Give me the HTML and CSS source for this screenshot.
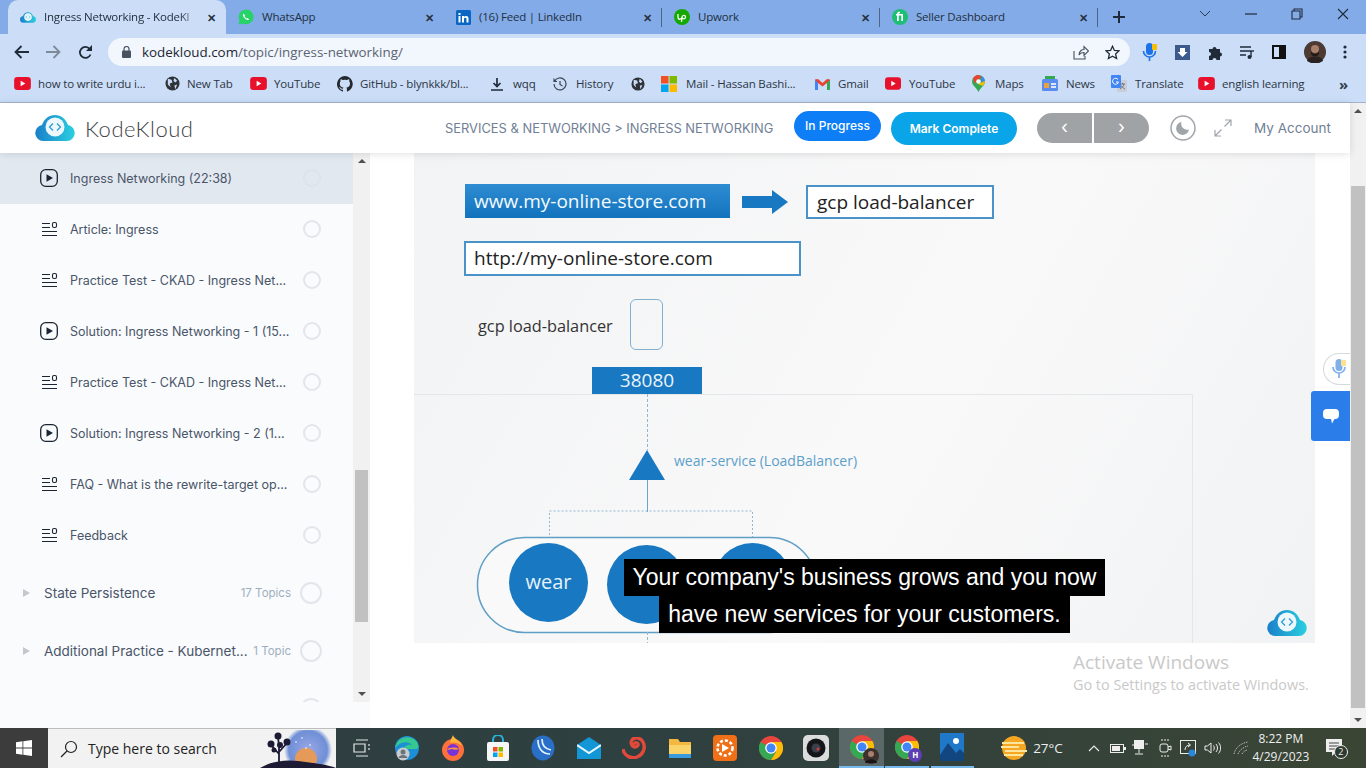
FILE: index.html
```html
<!DOCTYPE html>
<html>
<head>
  <title>Ingress Networking - KodeKloud</title>
  <link rel="stylesheet" href="styles.css">
</head>
<body>
  <svg class="defs" width="0" height="0">
    <defs>
      <linearGradient id="kkGrad" x1="0" x2="1" y1="0" y2="0">
        <stop offset="0" stop-color="#1a7fc9"/>
        <stop offset="1" stop-color="#2ad0e0"/>
      </linearGradient>
      <radialGradient id="glow" cx=".5" cy=".5" r=".5">
        <stop offset="0" stop-color="#9aa8e6"/>
        <stop offset=".8" stop-color="#6f8fd6"/>
        <stop offset="1" stop-color="#f2f2f2"/>
      </radialGradient>
      <symbol id="kk" viewBox="0 0 40 26">
        <path d="M8 26a8 8 0 0 1-1-15.900C9 4 14 0 20 0s11 4 13 10.100A8 8 0 0 1 32 26z" fill="url(#kkGrad)"/>
        <circle cx="20" cy="12" r="9.500" fill="#eef8fc"/>
        <path d="M18 8.500 14.500 12l3.500 3.500M22 8.500l3.500 3.500-3.500 3.500" fill="none" stroke="#2a9fd6" stroke-width="1.300"/>
      </symbol>
      <symbol id="yt" viewBox="0 0 18 14">
        <rect width="18" height="14" rx="3.500" fill="#e8112b"/>
        <path d="M7 4l5 3-5 3z" fill="#fff"/>
      </symbol>
      <symbol id="globe" viewBox="0 0 16 16">
        <circle cx="8" cy="8" r="7.500" fill="#2f3237"/>
        <path d="M3 3l4 1 1 3-3 1 1 4-3-3zM10 2l3 3-2 2-2-2zM10 10l3-1-2 5z" fill="#c9dbf6"/>
      </symbol>
      <symbol id="play" viewBox="0 0 18 18">
        <rect x=".7" y=".7" width="16.600" height="16.600" rx="5" fill="none" stroke="#1a2433" stroke-width="1.300"/>
        <path d="M6.500 5.200v7.600L13 9z" fill="#1a2433"/>
      </symbol>
      <symbol id="doc" viewBox="0 0 16 16">
        <path d="M1 2.500h8M1 6.500h8M1 10.500h15M1 14.500h15" fill="none" stroke="#1a2433" stroke-width="1.100"/>
        <rect x="11.500" y="1.500" width="4" height="5" rx="1.500" fill="none" stroke="#1a2433" stroke-width="1.100"/>
      </symbol>
      <symbol id="chrome" viewBox="0 0 24 24">
        <circle cx="12" cy="12" r="12" fill="#e8453c"/>
        <path d="M12 12 1.600 6A12 12 0 0 0 12 24l5-8z" fill="#34a853"/>
        <path d="M12 6h10.400A12 12 0 0 1 12 24l5-8z" fill="#fbbc05"/>
        <circle cx="12" cy="12" r="5.800" fill="#fff"/>
        <circle cx="12" cy="12" r="4.500" fill="#4285f4"/>
      </symbol>
    </defs>
  </svg>

  <div class="tabstrip">
    <div class="tab tab-active">
      <svg class="fav" width="16" height="11"><use href="#kk"/></svg>
      <span class="tab-title tab-title-fade">Ingress Networking - KodeKl</span>
      <span class="tab-x">✕</span>
    </div>
    <div class="tab">
      <svg class="fav" width="16" height="16" viewBox="0 0 16 16"><path d="M.5 15.500l1.100-4A7.400 7.400 0 1 1 4.500 14.400z" fill="#25d366"/><path d="M5.500 4.500c-1 1-.6 3 1.200 4.700s3.500 2.300 4.500 1.200l-1.600-1.500-1 .6c-1-.5-1.700-1.300-2.100-2.200l.7-.9z" fill="#fff"/></svg>
      <span class="tab-title">WhatsApp</span>
      <span class="tab-x">✕</span>
    </div>
    <div class="tab">
      <svg class="fav" width="15" height="15" viewBox="0 0 15 15"><rect width="15" height="15" rx="1.500" fill="#0a66c2"/><path d="M2.500 6h2v6.500h-2zM2.500 3h2v2h-2zM6 6h2v1c.6-1.400 4.500-1.800 4.500 1.500v4h-2V9c0-1.800-2.500-1.600-2.500 0v3.500H6z" fill="#fff"/></svg>
      <span class="tab-title">(16) Feed | LinkedIn</span>
      <span class="tab-x">✕</span>
    </div>
    <div class="tab">
      <svg class="fav" width="16" height="16" viewBox="0 0 16 16"><circle cx="8" cy="8" r="8" fill="#14a800"/><path d="M4 5v3c0 3 3.500 3 4 0 .3-2 3.500-2.500 3.500 0s-3 2.300-3.500.3L7.500 13" fill="none" stroke="#fff" stroke-width="1.300"/></svg>
      <span class="tab-title">Upwork</span>
      <span class="tab-x">✕</span>
    </div>
    <div class="tab">
      <svg class="fav" width="16" height="16" viewBox="0 0 16 16"><circle cx="8" cy="8" r="8" fill="#1dbf73"/><path d="M5 12V6.500H4V5h1c0-2 1.500-2.500 3-2.200v1.400c-.8-.1-1.200 0-1.200.8H11v7H9.300V6.500H6.800V12z" fill="#fff"/></svg>
      <span class="tab-title">Seller Dashboard</span>
      <span class="tab-x">✕</span>
    </div>
    <span class="tab-plus">
      <svg width="12" height="12" viewBox="0 0 12 12"><path d="M6 0v12M0 6h12" stroke="#1f2a3a" stroke-width="2"/></svg>
    </span>
    <div class="win-controls">
      <svg width="12" height="8" viewBox="0 0 12 8"><path d="M1 1l5 5 5-5" fill="none" stroke="#2d3a4d" stroke-width="1"/></svg>
      <svg width="12" height="2" viewBox="0 0 12 2"><path d="M0 1h12" stroke="#1f2a3a" stroke-width="1.200"/></svg>
      <svg width="12" height="12" viewBox="0 0 12 12"><path d="M3 3V1h8v8H9M1 3h8v8H1z" fill="none" stroke="#1f2a3a" stroke-width="1.100"/></svg>
      <svg width="12" height="12" viewBox="0 0 12 12"><path d="M1 1l10 10M11 1 1 11" stroke="#1f2a3a" stroke-width="1.100"/></svg>
    </div>
  </div>

  <div class="toolbar">
    <svg class="nav-btn" width="16" height="14" viewBox="0 0 16 14"><path d="M15 7H2M7.500 1 1.500 7l6 6" fill="none" stroke="#202b3a" stroke-width="1.800"/></svg>
    <svg class="nav-btn" width="16" height="14" viewBox="0 0 16 14"><path d="M1 7h13M8.500 1l6 6-6 6" fill="none" stroke="#7f8a99" stroke-width="1.800"/></svg>
    <svg class="nav-btn" width="15" height="15" viewBox="0 0 15 15"><path d="M12.500 9.500a5.500 5.500 0 1 1-.8-5.500" fill="none" stroke="#202b3a" stroke-width="1.800"/><path d="M14 0v6H8z" fill="#202b3a"/></svg>
    <div class="omnibox">
      <svg width="9" height="12" viewBox="0 0 9 12"><rect y="4.500" width="9" height="7.500" rx="1" fill="#4a5260"/><path d="M2 5V3a2.500 2.500 0 0 1 5 0v2" fill="none" stroke="#4a5260" stroke-width="1.200"/></svg>
      <span class="url"><b>kodekloud.com</b>/topic/ingress-networking/</span>
      <svg class="omni-share" width="16" height="15" viewBox="0 0 16 15"><path d="M1 6v8h11v-3M6 10c0-4 3-5.500 5-5.500V1.500L15.500 6 11 10.500v-3c-2 0-4 .5-5 2.500z" fill="none" stroke="#46505f" stroke-width="1.100"/></svg>
      <svg class="omni-star" width="15" height="15" viewBox="0 0 15 15"><path d="M7.500 1.200l1.900 4.200 4.600.5-3.400 3.100 1 4.500-4.100-2.300-4.100 2.300 1-4.500L1 5.900l4.600-.5z" fill="none" stroke="#202b3a" stroke-width="1.300"/></svg>
    </div>
    <div class="ext-icons">
      <svg width="16" height="18" viewBox="0 0 16 18"><rect x="4" y="0" width="7" height="12" rx="3.500" fill="#1a73e8"/><rect x="10" y="1" width="5" height="6" rx="1" fill="#fbbc05"/><path d="M1.500 8a6 6 0 0 0 12 0M7.500 14v4" fill="none" stroke="#1a73e8" stroke-width="1.600"/></svg>
      <svg width="15" height="15" viewBox="0 0 15 15"><rect width="15" height="15" fill="#3c5a8c"/><path d="M5 3h5v4h2.500l-5 5-5-5H5z" fill="#fff"/></svg>
      <svg width="15" height="15" viewBox="0 0 15 15"><path d="M1 4h3.500a2 2 0 1 1 4 0H12v3.500a2 2 0 1 1 0 4V15H8.500a2 2 0 1 0-4 0H1v-4a2 2 0 1 0 0-4z" fill="#202b3a"/></svg>
      <svg width="15" height="13" viewBox="0 0 15 13"><path d="M0 1h11M0 5h11M0 9h6" stroke="#202b3a" stroke-width="1.400"/><path d="M11 5v6" stroke="#202b3a" stroke-width="1.400"/><circle cx="9.500" cy="11" r="2" fill="#202b3a"/><path d="M11 5h3" stroke="#202b3a" stroke-width="1.400"/></svg>
      <svg width="14" height="14" viewBox="0 0 14 14"><rect x="1" y="1" width="12" height="12" fill="none" stroke="#111" stroke-width="2"/><rect x="7" y="1" width="6" height="12" fill="#111"/></svg>
      <svg width="22" height="22" viewBox="0 0 22 22"><circle cx="11" cy="11" r="11" fill="#4c3a33"/><circle cx="11" cy="8" r="4" fill="#a87f68"/><path d="M3 20c1-6 15-6 16 0l-4 2H7z" fill="#2a2220"/><path d="M7 10c1 4 7 4 8 0v3c-2 3-6 3-8 0z" fill="#201815"/></svg>
      <svg width="4" height="14" viewBox="0 0 4 14"><circle cx="2" cy="2" r="1.600" fill="#202b3a"/><circle cx="2" cy="7" r="1.600" fill="#202b3a"/><circle cx="2" cy="12" r="1.600" fill="#202b3a"/></svg>
    </div>
  </div>

  <div class="bookmarks">
    <span class="bm bm-a"><svg width="17" height="13"><use href="#yt"/></svg>how to write urdu i...</span>
    <span class="bm bm-b"><svg width="15" height="15"><use href="#globe"/></svg>New Tab</span>
    <span class="bm bm-c"><svg width="17" height="13"><use href="#yt"/></svg>YouTube</span>
    <span class="bm bm-d"><svg width="16" height="16" viewBox="0 0 16 16"><path d="M8 0a8 8 0 0 0-2.500 15.600c.4.100.5-.2.500-.4v-1.500c-2.200.5-2.700-1-2.700-1-.4-.9-.9-1.200-.9-1.200-.7-.5.100-.5.100-.5.800.100 1.200.8 1.200.8.700 1.200 1.900.9 2.300.7.100-.5.300-.9.500-1.100-1.800-.2-3.700-.9-3.700-4 0-.9.300-1.600.8-2.100-.1-.2-.4-1 .1-2.100 0 0 .7-.2 2.200.8a7.600 7.600 0 0 1 4 0c1.500-1 2.200-.8 2.200-.8.400 1.100.2 1.900.1 2.100.5.600.8 1.300.8 2.100 0 3.100-1.900 3.800-3.700 4 .3.300.6.800.6 1.500v2.200c0 .2.100.5.600.4A8 8 0 0 0 8 0z" fill="#24292f"/></svg>GitHub - blynkkk/bl...</span>
    <span class="bm bm-e"><svg width="12" height="14" viewBox="0 0 12 14"><path d="M6 1v8M2.500 6 6 9.500 9.500 6M0 13h12" fill="none" stroke="#202b3a" stroke-width="1.700"/></svg>wqq</span>
    <span class="bm bm-f"><svg width="14" height="14" viewBox="0 0 14 14"><path d="M1.500 4.500A6 6 0 1 1 1 7M1 1.500v3h3M7 4v3.500L9.500 9" fill="none" stroke="#3b4553" stroke-width="1.200"/></svg>History</span>
    <span class="bm bm-g"><svg width="14" height="14"><use href="#globe"/></svg></span>
    <span class="bm bm-h"><svg width="16" height="16" viewBox="0 0 16 16"><rect width="7.500" height="7.500" fill="#f25022"/><rect x="8.500" width="7.500" height="7.500" fill="#7fba00"/><rect y="8.500" width="7.500" height="7.500" fill="#00a4ef"/><rect x="8.500" y="8.500" width="7.500" height="7.500" fill="#ffb900"/></svg>Mail - Hassan Bashi...</span>
    <span class="bm bm-i"><svg width="15" height="12" viewBox="0 0 15 12"><path d="M0 12V1.500L3 1l4.500 4L12 1l3 .5V12h-3V5L7.500 8.500 3 5v7z" fill="#ea4335"/><path d="M0 12V2l3 2.500V12z" fill="#4285f4"/><path d="M12 12V4.500L15 2v10z" fill="#34a853"/></svg>Gmail</span>
    <span class="bm bm-j"><svg width="16" height="13"><use href="#yt"/></svg>YouTube</span>
    <span class="bm bm-k"><svg width="13" height="17" viewBox="0 0 13 17"><path d="M6.500 0A6.500 6.500 0 0 1 13 6.500c0 4-4.500 6-6.500 10.500C4.500 12.500 0 10.500 0 6.500A6.500 6.500 0 0 1 6.500 0z" fill="#34a853"/><path d="M1 3.500A6.500 6.500 0 0 1 6.500 0l3 1.500-6.500 7z" fill="#ea4335"/><path d="M9.500 1A6.500 6.500 0 0 1 13 6l-4 1z" fill="#4285f4"/><path d="M13 6c0 2-1 3.500-2.500 5L6 9z" fill="#fbbc05"/><circle cx="6.500" cy="6.500" r="2.300" fill="#fff"/></svg>Maps</span>
    <span class="bm bm-l"><svg width="16" height="15" viewBox="0 0 16 15"><rect x="3" y="0" width="10" height="5" fill="#34a853"/><rect x="0" y="3" width="16" height="12" rx="1.500" fill="#5b8def"/><path d="M9 7h5v2H9zM9 10h5v2H9z" fill="#dbe7fb"/><rect x="2" y="7" width="5" height="5" fill="#e8a33d"/></svg>News</span>
    <span class="bm bm-m"><svg width="16" height="17" viewBox="0 0 16 17"><rect x="6" y="5" width="10" height="12" rx="1" fill="#c9ced6"/><path d="M9 9h5M11.500 8v1M13 9c-.5 2-2 4-4 5M10 10.500c1 1.500 2 2.500 4 3.500" fill="none" stroke="#5f6670" stroke-width=".8"/><rect width="10" height="13" rx="1" fill="#4285f4"/><path d="M7 4.500A3 3 0 1 0 7.500 7H5" fill="none" stroke="#fff" stroke-width="1"/></svg>Translate</span>
    <span class="bm bm-n"><svg width="17" height="13"><use href="#yt"/></svg>english learning</span>
    <span class="bm-more">»</span>
  </div>

  <div class="page">
    <div class="page-main">
      <header class="site-head">
        <div class="brand">
          <svg width="40" height="26"><use href="#kk"/></svg>
          <span class="brand-name">KodeKloud</span>
        </div>
        <span class="crumb">SERVICES &amp; NETWORKING &gt; INGRESS NETWORKING</span>
        <span class="btn-progress">In Progress</span>
        <span class="btn-complete">Mark Complete</span>
        <div class="pager">
          <span class="pager-btn">‹</span>
          <span class="pager-btn">›</span>
        </div>
        <svg class="moon" width="26" height="26" viewBox="0 0 26 26"><circle cx="13" cy="13" r="12" fill="none" stroke="#a0a5ab" stroke-width="1.500"/><path d="M11.500 7a6.500 6.500 0 1 0 7.500 7.500A6 6 0 0 1 11.500 7z" fill="#a0a5ab"/></svg>
        <svg class="expand" width="18" height="18" viewBox="0 0 18 18"><path d="M11 1h6v6M17 1 10.500 7.500M7 17H1v-6M1 17l6.500-6.500" fill="none" stroke="#a0a5ab" stroke-width="1.200"/></svg>
        <span class="account">My Account</span>
      </header>

      <div class="course">
        <aside class="sidebar">
          <div class="topic-list">
            <div class="topic topic-on"><svg width="18" height="18"><use href="#play"/></svg><span class="topic-name">Ingress Networking (22:38)</span><i class="check check-dim"></i></div>
            <div class="topic"><svg width="16" height="16"><use href="#doc"/></svg><span class="topic-name">Article: Ingress</span><i class="check"></i></div>
            <div class="topic"><svg width="16" height="16"><use href="#doc"/></svg><span class="topic-name">Practice Test - CKAD - Ingress Net...</span><i class="check"></i></div>
            <div class="topic"><svg width="18" height="18"><use href="#play"/></svg><span class="topic-name">Solution: Ingress Networking - 1 (15...</span><i class="check"></i></div>
            <div class="topic"><svg width="16" height="16"><use href="#doc"/></svg><span class="topic-name">Practice Test - CKAD - Ingress Net...</span><i class="check"></i></div>
            <div class="topic"><svg width="18" height="18"><use href="#play"/></svg><span class="topic-name">Solution: Ingress Networking - 2 (1...</span><i class="check"></i></div>
            <div class="topic"><svg width="16" height="16"><use href="#doc"/></svg><span class="topic-name">FAQ - What is the rewrite-target op...</span><i class="check"></i></div>
            <div class="topic"><svg width="16" height="16"><use href="#doc"/></svg><span class="topic-name">Feedback</span><i class="check"></i></div>
            <div class="lesson"><i class="caret"></i><span class="lesson-name">State Persistence</span><span class="lesson-count">17 Topics</span><i class="check check-big"></i></div>
            <div class="lesson"><i class="caret"></i><span class="lesson-name">Additional Practice - Kubernet...</span><span class="lesson-count">1 Topic</span><i class="check check-big"></i></div>
            <div class="lesson"><i class="check check-big"></i></div>
          </div>
          <div class="side-scroll">
            <i class="arrow-up"></i>
            <i class="side-thumb"></i>
            <i class="arrow-down"></i>
          </div>
        </aside>

        <main class="lesson-view">
          <div class="video">
            <svg class="video-lines" width="901" height="490" viewBox="0 0 901 490">
              <path d="M233.500 241v56" stroke="#8fb8d6" stroke-dasharray="3 2" fill="none"/>
              <path d="M233.500 327v32" stroke="#6aa5cf" fill="none"/>
              <path d="M135.500 390v-32h203v32" stroke="#8fb8d6" stroke-dasharray="2 2" fill="none"/>
              <path d="M215 327 233 297l18 30z" fill="#1878c2"/>
              <path d="M328 46h30v-6l16 12-16 12v-6h-30z" fill="#1878c2" transform="translate(0 -3)"/>
              <rect x="63.500" y="384.500" width="339" height="95" rx="47" fill="#f9f9fa" stroke="#5f9fc6" stroke-width="1.500"/>
              <path d="M233.500 479v12" stroke="#8fb8d6" stroke-dasharray="3 2" fill="none"/>
            </svg>
            <div class="cluster-box"></div>
            <span class="url-blue">www.my-online-store.com</span>
            <span class="gcp-box">gcp load-balancer</span>
            <span class="url-white">http://my-online-store.com</span>
            <span class="gcp-label">gcp load-balancer</span>
            <span class="gcp-node"></span>
            <span class="port">38080</span>
            <span class="svc-label">wear-service (LoadBalancer)</span>
            <span class="pod pod-1">wear</span>
            <span class="pod pod-2"></span>
            <span class="pod pod-3"></span>
            <svg class="video-logo" width="40" height="26"><use href="#kk"/></svg>
            <div class="caption">
              <span class="caption-line">Your company's business grows and you now</span>
              <span class="caption-line">have new services for your customers.</span>
            </div>
          </div>
          <div class="activate">
            <div class="activate-big">Activate Windows</div>
            <div class="activate-small">Go to Settings to activate Windows.</div>
          </div>
          <div class="mic-bubble">
            <svg width="14" height="20" viewBox="0 0 14 20"><rect x="3.500" y="0" width="7" height="12" rx="3.500" fill="#7eb0ee"/><rect x="9" y="1" width="5" height="6" fill="#fde293"/><path d="M1 8a6 6 0 0 0 12 0M7 14v5" fill="none" stroke="#7eb0ee" stroke-width="1.700"/></svg>
          </div>
          <div class="chat-tab">
            <svg width="16" height="15" viewBox="0 0 16 15"><path d="M4 0h8a4 4 0 0 1 4 4v2a4 4 0 0 1-4 4h-.5L9 14.500 8 10H4a4 4 0 0 1-4-4V4a4 4 0 0 1 4-4z" fill="#fff"/></svg>
          </div>
        </main>
      </div>
    </div>

    <div class="page-scroll">
      <i class="arrow-up"></i>
      <i class="page-thumb"></i>
      <i class="arrow-down"></i>
    </div>
  </div>

  <footer class="taskbar">
    <span class="start">
      <svg width="16" height="16" viewBox="0 0 16 16"><path d="M0 2.200 6.500 1.300v6.300H0zM7.300 1.200 16 0v7.600H7.300zM0 8.400h6.500v6.300L0 13.800zM7.300 8.400H16V16l-8.700-1.200z" fill="#fff"/></svg>
    </span>
    <div class="searchbox">
      <svg width="18" height="18" viewBox="0 0 18 18"><circle cx="11" cy="7" r="5.500" fill="none" stroke="#222" stroke-width="1.200"/><path d="M7 11l-6 6" stroke="#222" stroke-width="1.200"/></svg>
      <span class="search-text">Type here to search</span>
      <svg class="search-art" width="76" height="38" viewBox="0 0 76 38"><circle cx="48" cy="20" r="24" fill="url(#glow)"/><circle cx="46" cy="29" r="11" fill="#e59a5a"/><path d="M0 38c10-6 24-9 38-7s28 3 38 7z" fill="#1d1a33"/><path d="M19 33V15M19 24l-8-9M19 22l8-9M19 16l-1-9" stroke="#1d1a33" stroke-width="1.800" fill="none"/><circle cx="11" cy="14" r="3.500" fill="#1d1a33"/><circle cx="27" cy="12" r="3.500" fill="#1d1a33"/><circle cx="18" cy="6" r="3.500" fill="#1d1a33"/><circle cx="20" cy="15" r="3" fill="#1d1a33"/><circle cx="14" cy="20" r="2.500" fill="#1d1a33"/><circle cx="36" cy="12" r=".8" fill="#fff"/><circle cx="42" cy="8" r=".8" fill="#fff"/><circle cx="50" cy="15" r=".8" fill="#fff"/><circle cx="46" cy="18" r=".8" fill="#fff"/></svg>
    </div>
    <div class="apps">
      <span class="app"><svg width="18" height="18" viewBox="0 0 18 18"><path d="M3 1h12M3 17h12M1 5h11v8H1zM16 5v2M16 9v2M16 13v0" fill="none" stroke="#e6e6e6" stroke-width="1.200"/></svg></span>
      <span class="app"><svg width="26" height="26" viewBox="0 0 26 26"><circle cx="13" cy="13" r="12" fill="#1d8fd6"/><path d="M1 13C2 4 14-2 22 6c3 3 3 8 0 8H10c0-3 4-5 8-4-4-5-13-3-17 3z" fill="#35c88f"/><circle cx="9" cy="19" r="6.500" fill="#c8ccd0"/><circle cx="9" cy="17" r="2.500" fill="#6c7278"/><path d="M4.500 23c1-4 8-4 9 0z" fill="#6c7278"/></svg></span>
      <span class="app"><svg width="24" height="26" viewBox="0 0 24 26"><circle cx="12" cy="15" r="11" fill="#ff7139"/><path d="M12 0c1 4 7 5 9 11-4-4-9-4-12-3C9 5 11 3 12 0z" fill="#ffb43a"/><circle cx="12" cy="15" r="6" fill="#7a33d6"/><path d="M6 15c2-3 8-3 12-1-2 1-5 1-7 0z" fill="#ff9640"/></svg></span>
      <span class="app"><svg width="22" height="26" viewBox="0 0 22 26"><path d="M6 8V5a5 5 0 0 1 10 0v3" fill="none" stroke="#28b4d8" stroke-width="2"/><rect y="7" width="22" height="19" rx="2" fill="#f6f6f6"/><rect x="6" y="12" width="4.500" height="4.500" fill="#f25022"/><rect x="11.500" y="12" width="4.500" height="4.500" fill="#7fba00"/><rect x="6" y="17.500" width="4.500" height="4.500" fill="#00a4ef"/><rect x="11.500" y="17.500" width="4.500" height="4.500" fill="#ffb900"/></svg></span>
      <span class="app"><svg width="24" height="26" viewBox="0 0 24 26"><ellipse cx="12" cy="13" rx="11.500" ry="12.500" fill="#2a6fc7"/><path d="M7 5c0 8 4 14 12 14M11 4c0 6 3 10 9 11" fill="none" stroke="#dff0ff" stroke-width="1.700"/></svg></span>
      <span class="app"><svg width="24" height="24" viewBox="0 0 24 24"><path d="M0 9 12 1l12 8v14H0z" fill="#1296d6"/><path d="M0 9l12 8 12-8" fill="none" stroke="#eaf8fe" stroke-width="2"/></svg></span>
      <span class="app"><svg width="24" height="22" viewBox="0 0 24 22"><path d="M1 12c1 7 8 10 14 8s9-9 6-15c-2-4-8-6-11-2-2 3 0 7 3 7s4-3 2-4-3 1-2 2" fill="none" stroke="#e2493a" stroke-width="3.400"/></svg></span>
      <span class="app"><svg width="22" height="22" viewBox="0 0 22 22"><path d="M0 2h9l2 3h11v16H0z" fill="#f4b73f"/><rect y="8" width="22" height="13" fill="#fbd36b"/><rect x="0" y="17" width="22" height="4" fill="#3a9bdc"/></svg></span>
      <span class="app"><svg width="24" height="26" viewBox="0 0 24 26"><rect width="24" height="26" rx="4" fill="#f07018"/><circle cx="12" cy="13" r="7.500" fill="none" stroke="#fff" stroke-width="2.600" stroke-dasharray="3 2"/><path d="M9 9l7 4-7 4z" fill="#fff"/></svg></span>
      <span class="app"><svg width="24" height="24"><use href="#chrome"/></svg></span>
      <span class="app"><svg width="26" height="26" viewBox="0 0 26 26"><rect width="26" height="26" rx="5" fill="#dcdcdc"/><circle cx="13" cy="13" r="9.500" fill="#14161a"/><circle cx="13" cy="13" r="4.500" fill="#3a3f4a"/><circle cx="15" cy="14" r="1.500" fill="#d23b3b"/></svg></span>
      <span class="app app-on">
        <svg width="24" height="24"><use href="#chrome"/></svg>
        <svg class="app-badge" width="16" height="16" viewBox="0 0 16 16"><circle cx="8" cy="8" r="8" fill="#3b3230"/><circle cx="8" cy="6" r="3" fill="#a87f68"/><path d="M2 15c1-5 11-5 12 0z" fill="#1b1614"/></svg>
      </span>
      <span class="app app-open">
        <svg width="24" height="24"><use href="#chrome"/></svg>
        <span class="app-badge app-badge-h">H</span>
      </span>
      <span class="app app-open"><svg width="24" height="28" viewBox="0 0 24 28"><rect width="24" height="28" fill="#1f78c8"/><path d="M0 22l8-12 8 10 4-4 4 4v8H0z" fill="#12467f"/><circle cx="16" cy="8" r="3" fill="#fff"/></svg></span>
    </div>
    <div class="tray">
      <svg class="tray-weather" width="26" height="26" viewBox="0 0 26 26"><circle cx="13" cy="13" r="12" fill="#f5a623"/><path d="M1 8h22M0 12h18M4 16h22M3 20h19" stroke="#fde59b" stroke-width="1.800"/></svg>
      <span class="tray-temp">27°C</span>
      <svg class="tray-chev" width="12" height="7" viewBox="0 0 12 7"><path d="M1 6l5-5 5 5" fill="none" stroke="#eee" stroke-width="1.100"/></svg>
      <svg class="tray-batt" width="16" height="9" viewBox="0 0 16 9"><rect x=".5" y=".5" width="13" height="8" fill="none" stroke="#eee"/><rect x="2" y="2" width="8" height="5" fill="#eee"/><rect x="14" y="3" width="2" height="3" fill="#eee"/></svg>
      <svg class="tray-net" width="16" height="16" viewBox="0 0 16 16"><rect x="2" y="0" width="10" height="9" fill="#eee"/><path d="M0 5h4M7 9v4M3 14h8M13 4h3" stroke="#eee" fill="none"/></svg>
      <svg class="tray-cam" width="14" height="18" viewBox="0 0 14 18"><path d="M3 1h8M3 17h8" stroke="#eee" stroke-dasharray="2 1"/><rect x="2" y="5" width="8" height="8" rx="2" fill="none" stroke="#eee"/><path d="M10 8l3-1v4l-3-1" fill="none" stroke="#eee"/></svg>
      <svg class="tray-share" width="17" height="17" viewBox="0 0 17 17"><rect x=".5" y=".5" width="15" height="13" fill="none" stroke="#eee"/><path d="M5 10c0-3 2-5 5-5M8 3l2.500 2L8 7" fill="none" stroke="#eee"/><circle cx="12" cy="13" r="3.500" fill="#2a86d8"/></svg>
      <svg class="tray-sound" width="17" height="14" viewBox="0 0 17 14"><path d="M1 5h2.500L7 2v10L3.500 9H1zM9.500 4.500c1 1.500 1 3.500 0 5M12 3c2 2.200 2 5.800 0 8M14.500 1.500c2.800 3 2.800 8 0 11" fill="none" stroke="#eee" stroke-width="1"/></svg>
      <svg class="tray-wifi" width="16" height="14" viewBox="0 0 16 14"><path d="M1 13C2 7 8 2 15 1M5 13c1-3 5-7 10-8M9 13c1-2 3-4 6-4" fill="none" stroke="#bbb" stroke-dasharray="1.500 1"/><path d="M15 13v-.1" stroke="#eee" stroke-width="2"/></svg>
      <div class="clock"><span>8:22 PM</span><span>4/29/2023</span></div>
      <span class="notify">
        <svg width="16" height="18" viewBox="0 0 16 18"><path d="M0 0h16v13h-6l-4 4v-4H0z" fill="#eee"/><path d="M3 4h10M3 7h10M3 10h6" stroke="#444"/></svg>
        <span class="notify-count">2</span>
      </span>
    </div>
  </footer>
</body>
</html>
```

FILE: styles.css
```css
* {
  box-sizing: border-box;
}
html, body {
  margin: 0;
  padding: 0;
  height: 768px;
  overflow: hidden;
}
body {
  display: flex;
  flex-direction: column;
  font-family: "Open Sans", sans-serif;
  background: #fff;
}
.defs {
  position: absolute;
}
i {
  display: block;
}

/* browser tabs */
.tabstrip {
  display: flex;
  align-items: center;
  height: 34px;
  padding-left: 8px;
  background: #83abe8;
  flex: none;
}
.tab {
  display: flex;
  align-items: center;
  width: 218px;
  height: 34px;
  padding: 0 10px 0 12px;
  position: relative;
  font-size: 11.500px;
  letter-spacing: -.2px;
  color: #22303f;
}
.tab:nth-child(n+3)::after {
  content: "";
  position: absolute;
  right: 0;
  top: 8px;
  height: 19px;
  width: 1px;
  background: #4f6584;
}
.tab-active {
  background: #cbddf7;
  border-radius: 10px 10px 0 0;
}
.fav {
  flex: none;
  margin-right: 8px;
}
.tab-title {
  flex: 1;
  padding-bottom: 2px;
  white-space: nowrap;
}
.tab-title-fade {
  -webkit-mask-image: linear-gradient(90deg, #000 85%, transparent 99%);
  mask-image: linear-gradient(90deg, #000 85%, transparent 99%);
}
.tab-x {
  font-size: 11px;
  font-weight: 700;
  margin-left: 4px;
  color: #26323f;
}
.tab-plus {
  display: flex;
  margin-left: 15px;
}
.win-controls {
  display: flex;
  align-items: center;
  justify-content: space-between;
  margin-left: auto;
  margin-right: 17px;
  width: 150px;
  padding-bottom: 6px;
}

/* address bar */
.toolbar {
  display: flex;
  align-items: center;
  height: 33px;
  padding: 4px 0 1px 14px;
  background: #cbddf7;
  flex: none;
}
.nav-btn {
  margin-right: 15px;
}
.nav-btn:nth-of-type(3) {
  margin-left: 2px;
  margin-right: 15px;
}
.omnibox {
  display: flex;
  align-items: center;
  width: 1022px;
  height: 28px;
  padding: 0 10px 0 14px;
  background: #f2f6fd;
  border-radius: 14px;
  flex: none;
}
.url {
  margin-left: 11px;
  font-size: 13.400px;
  color: #5a6472;
}
.url b {
  font-weight: 400;
  color: #1c2634;
}
.omni-share {
  margin-left: auto;
}
.omni-star {
  margin-left: 16px;
}
.ext-icons {
  display: flex;
  align-items: center;
  justify-content: space-between;
  width: 236px;
  padding-left: 12px;
  padding-right: 19px;
  flex: none;
}

/* bookmarks */
.bookmarks {
  display: flex;
  align-items: center;
  height: 36px;
  padding-left: 14px;
  background: #cbddf7;
  border-bottom: 1px solid #a4b3c8;
  flex: none;
  position: relative;
}
.bm {
  display: flex;
  align-items: center;
  gap: 7px;
  padding-bottom: 2px;
  font-size: 11.500px;
  letter-spacing: -.15px;
  color: #2b3644;
  white-space: nowrap;
  flex: none;
}
.bm-a { width: 151px; }
.bm-b { width: 85px; }
.bm-c { width: 87px; }
.bm-d { width: 154px; }
.bm-e { width: 62px; gap: 10px; }
.bm-f { width: 78px; gap: 9px; }
.bm-g { width: 30px; }
.bm-h { width: 154px; gap: 9px; }
.bm-i { width: 70px; gap: 8px; }
.bm-j { width: 87px; gap: 8px; }
.bm-k { width: 70px; gap: 10px; }
.bm-l { width: 69px; gap: 8px; }
.bm-m { width: 87px; gap: 8px; }
.bm-n { width: 125px; }
.bm-more {
  margin-left: 16px;
  font-size: 15px;
  font-weight: 700;
  color: #333f4e;
  line-height: 1;
}

/* page */
.page {
  display: flex;
  flex: none;
  height: 625px;
}
.page-main {
  width: 1350px;
  display: flex;
  flex-direction: column;
}
.site-head {
  display: flex;
  align-items: center;
  height: 50px;
  padding-left: 35px;
  background: #fff;
  box-shadow: 0 1px 8px rgba(0, 0, 0, .12);
  position: relative;
  z-index: 3;
  flex: none;
  font-family: Inter, sans-serif;
}
.brand {
  display: flex;
  align-items: center;
  width: 410px;
}
.brand-name {
  margin-left: 10px;
  font-family: Lato, sans-serif;
  font-weight: 300;
  font-size: 22px;
  letter-spacing: .5px;
  color: #3f4348;
}
.crumb {
  width: 349px;
  font-size: 12.900px;
  color: #718096;
  white-space: nowrap;
}
.btn-progress {
  width: 87px;
  height: 30px;
  margin-top: -4px;
  border-radius: 15px;
  background: #0d7ef5;
  color: #fff;
  font-size: 12px;
  font-weight: 500;
  line-height: 29px;
  text-align: center;
}
.btn-complete {
  width: 126px;
  height: 33px;
  margin-left: 10px;
  border-radius: 17px;
  background: #0aa5e8;
  color: #fff;
  font-size: 12px;
  font-weight: 600;
  line-height: 33px;
  text-align: center;
}
.pager {
  display: flex;
  gap: 2px;
  margin-left: 20px;
}
.pager-btn {
  width: 55px;
  height: 30px;
  background: #a0a3a6;
  color: #fff;
  font-size: 18px;
  line-height: 28px;
  text-align: center;
}
.pager-btn:first-child {
  border-radius: 15px 0 0 15px;
}
.pager-btn:last-child {
  border-radius: 0 15px 15px 0;
}
.moon {
  margin-left: 21px;
}
.expand {
  margin-left: 18px;
}
.account {
  margin-left: 22px;
  font-size: 13.500px;
  color: #718096;
}

.course {
  display: flex;
  flex: 1;
  min-height: 0;
}

/* sidebar */
.sidebar {
  display: flex;
  width: 370px;
  height: 575px;
  background: #f9fbfd;
  flex: none;
}
.topic-list {
  width: 353px;
  height: 549px;
  overflow: hidden;
  flex: none;
  font-family: Inter, sans-serif;
}
.topic {
  display: flex;
  align-items: center;
  height: 51px;
  padding: 0 0 2px 40px;
  font-size: 12.500px;
  color: #4a5568;
}
.topic svg {
  width: 18px;
  flex: none;
}
.topic-on {
  background: #e2e8f0;
}
.topic-name {
  width: 221px;
  margin-left: 12px;
  padding-top: 2px;
  white-space: nowrap;
}
.check {
  width: 18px;
  height: 18px;
  margin-left: 12px;
  border: 2px solid #e2e6ea;
  border-radius: 50%;
  flex: none;
}
.check-dim {
  border-color: #dde3ea;
}
.lesson {
  display: flex;
  align-items: center;
  height: 58px;
  font-size: 13.500px;
  color: #4a5568;
}
.topic + .lesson {
  margin-top: 3px;
}
.caret {
  width: 0;
  height: 0;
  margin-left: 23px;
  border-left: 7px solid #c4c8cc;
  border-top: 4.500px solid transparent;
  border-bottom: 4.500px solid transparent;
  flex: none;
}
.lesson-name {
  margin-left: 14px;
  white-space: nowrap;
}
.lesson-count {
  margin-left: auto;
  font-size: 11.500px;
  color: #a0aec0;
  white-space: nowrap;
}
.check-big {
  width: 22px;
  height: 22px;
  margin-left: 9px;
  margin-right: 31px;
}
.lesson:last-child .check-big {
  margin-left: auto;
}
.side-scroll {
  display: flex;
  flex-direction: column;
  align-items: center;
  position: relative;
  width: 17px;
  height: 549px;
  background: #f1f1f1;
}
.page-scroll {
  display: flex;
  flex-direction: column;
  align-items: center;
  position: relative;
  width: 16px;
  height: 625px;
  background: #f1f1f1;
}
.arrow-up, .arrow-down {
  position: absolute;
  left: 50%;
  margin-left: -4px;
  width: 0;
  height: 0;
  border-left: 4px solid transparent;
  border-right: 4px solid transparent;
}
.arrow-up {
  top: 6px;
  border-bottom: 4px solid #505050;
}
.arrow-down {
  bottom: 6px;
  border-top: 4px solid #505050;
}
.side-thumb {
  position: absolute;
  top: 317px;
  left: 2px;
  width: 13px;
  height: 152px;
  background: #c1c1c1;
}
.page-thumb {
  position: absolute;
  top: 83px;
  left: 1px;
  width: 14px;
  height: 522px;
  background: #c1c1c1;
}

/* video frame, the diagram inside is a free canvas */
.lesson-view {
  flex: 1;
  position: relative;
  padding-left: 44px;
  background: #fff;
}
.video {
  position: relative;
  width: 901px;
  height: 490px;
  overflow: hidden;
  background: linear-gradient(120deg, #f2f3f4, #f9f9fa 55%, #f1f2f3);
  font-family: "Open Sans", sans-serif;
}
.video-lines {
  position: absolute;
  left: 0;
  top: 0;
  z-index: 1;
}
.cluster-box {
  position: absolute;
  left: -1px;
  top: 241px;
  width: 780px;
  height: 260px;
  border: 1px solid #e4e6e8;
}
.url-blue, .gcp-box, .url-white, .gcp-label, .gcp-node, .port, .svc-label, .pod {
  position: absolute;
  z-index: 2;
  white-space: nowrap;
}
.url-blue {
  left: 51px;
  top: 31px;
  width: 265px;
  height: 34px;
  padding-left: 9px;
  background: linear-gradient(#2e8cd2, #1273bd);
  color: #f4faff;
  font-size: 19px;
  line-height: 34px;
}
.gcp-box {
  left: 392px;
  top: 32px;
  width: 188px;
  height: 34px;
  padding-left: 9px;
  background: #fff;
  border: 2px solid #4a93c8;
  color: #222;
  font-size: 19px;
  line-height: 30px;
}
.url-white {
  left: 50px;
  top: 88px;
  width: 337px;
  height: 35px;
  padding-left: 8px;
  background: #fff;
  border: 2px solid #4a93c8;
  color: #222;
  font-size: 19px;
  line-height: 31px;
}
.gcp-label {
  left: 64px;
  top: 162px;
  color: #333;
  font-size: 16.300px;
  line-height: 22px;
}
.gcp-node {
  left: 216px;
  top: 146px;
  width: 33px;
  height: 51px;
  border: 1.500px solid #82b1cf;
  border-radius: 6px;
}
.port {
  left: 178px;
  top: 214px;
  width: 110px;
  height: 27px;
  background: #1878c2;
  color: #eaf4fb;
  font-size: 19px;
  line-height: 27px;
  text-align: center;
}
.svc-label {
  left: 260px;
  top: 298px;
  color: #5c9fcb;
  font-size: 14px;
  line-height: 20px;
}
.pod {
  width: 79px;
  height: 79px;
  border-radius: 50%;
  background: #1878c2;
  color: #e6f2fa;
  font-size: 20px;
  line-height: 77px;
  text-align: center;
}
.pod-1 { left: 95px; top: 390px; }
.pod-2 { left: 193px; top: 392px; }
.pod-3 { left: 299px; top: 390px; }
.video-logo {
  position: absolute;
  left: 853px;
  top: 457px;
  z-index: 2;
}
.caption {
  position: absolute;
  left: 209px;
  top: 406px;
  width: 483px;
  z-index: 4;
  display: flex;
  flex-direction: column;
  align-items: center;
  font-family: "Liberation Sans", Arial, sans-serif;
}
.caption-line {
  height: 37px;
  padding: 0 9px;
  background: #000;
  color: #fff;
  font-size: 23px;
  line-height: 36px;
  white-space: nowrap;
}
.activate {
  position: absolute;
  left: 703px;
  top: 496px;
  color: #c9c9c9;
}
.activate-big {
  font-size: 19px;
  line-height: 26px;
}
.activate-small {
  font-size: 14.400px;
  line-height: 20px;
}
.mic-bubble {
  position: absolute;
  left: 953px;
  top: 200px;
  width: 27px;
  height: 32px;
  display: flex;
  align-items: center;
  padding-left: 8px;
  overflow: hidden;
  background: #fff;
  border: 1px solid #d5d8dc;
  border-right: none;
  border-radius: 16px 0 0 16px;
}
.chat-tab {
  position: absolute;
  left: 941px;
  top: 238px;
  width: 39px;
  height: 50px;
  display: flex;
  align-items: center;
  justify-content: center;
  background: #2b7de9;
  border-radius: 3px 0 0 3px;
}

/* windows taskbar */
.taskbar {
  display: flex;
  align-items: center;
  height: 40px;
  background: linear-gradient(90deg, #2e3e42, #2f4040 50%, #3a4534);
  flex: none;
  position: relative;
  z-index: 5;
}
.start {
  display: flex;
  align-items: center;
  justify-content: center;
  width: 48px;
  height: 40px;
  background: #3c3c3c;
  flex: none;
}
.searchbox {
  display: flex;
  align-items: center;
  position: relative;
  overflow: hidden;
  width: 288px;
  height: 40px;
  padding-left: 12px;
  background: #f2f2f2;
  border-top: 1px solid #bdbdbd;
  flex: none;
}
.search-text {
  margin-left: 10px;
  font-size: 14px;
  color: #222;
}
.search-art {
  position: absolute;
  right: 0;
  bottom: 0;
}
.apps {
  display: flex;
  margin-left: 3px;
  flex: none;
}
.app {
  display: flex;
  align-items: center;
  justify-content: center;
  position: relative;
  width: 45.450px;
  height: 40px;
  flex: none;
}
.app-on, .app-open {
  border-bottom: 2px solid #76b9ed;
}
.app-on {
  background: #5a6868;
}
.app-open {
  border-image: linear-gradient(90deg, transparent 4%, #76b9ed 4%, #76b9ed 96%, transparent 96%) 1;
}
.app-badge {
  position: absolute;
  left: 24px;
  top: 20px;
}
.app-badge-h {
  width: 14px;
  height: 14px;
  border-radius: 50%;
  background: #5c3fb5;
  color: #fff;
  font-size: 8px;
  font-weight: 700;
  line-height: 14px;
  text-align: center;
}
.tray {
  display: flex;
  align-items: center;
  flex: 1;
  height: 40px;
  color: #eee;
}
.tray-weather { margin-left: 26px; }
.tray-temp {
  margin-left: 6px;
  font-size: 13.500px;
}
.tray-chev { margin-left: 25px; }
.tray-batt { margin-left: 10px; }
.tray-net { margin-left: 6px; }
.tray-cam { margin-left: 10px; }
.tray-share { margin-left: 8px; }
.tray-sound { margin-left: 7px; }
.tray-wifi { margin-left: 12px; }
.clock {
  display: flex;
  flex-direction: column;
  align-items: center;
  width: 70px;
  margin-left: -3px;
  font-size: 12px;
  line-height: 18px;
}
.notify {
  position: relative;
  display: flex;
  margin-left: 10px;
}
.notify-count {
  position: absolute;
  left: 8px;
  top: 6px;
  width: 14px;
  height: 14px;
  border: 1px solid #eee;
  border-radius: 50%;
  background: #2e3a30;
  font-size: 9px;
  line-height: 12px;
  text-align: center;
}
```
